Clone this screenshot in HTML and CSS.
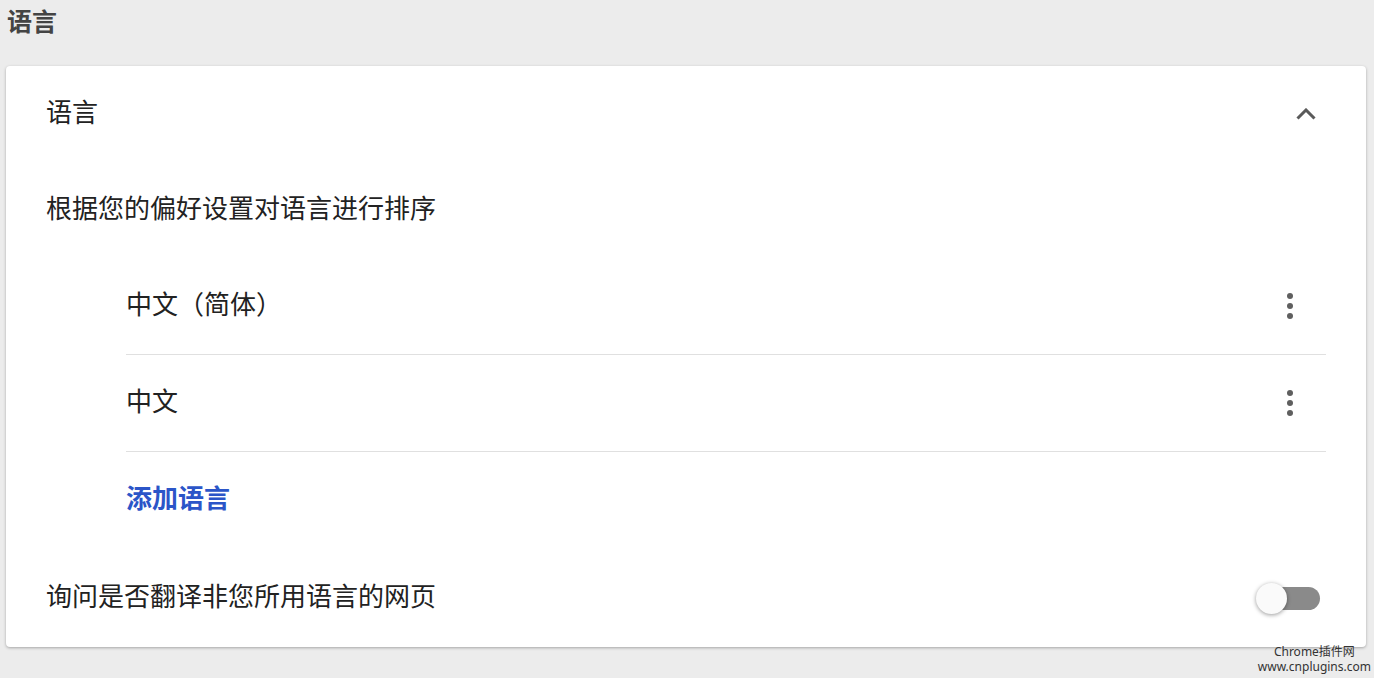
FILE: index.html
```html
<!DOCTYPE html>
<html>
    <head>
        <meta charset="UTF-8">
        <title>语言</title>
        <link rel="stylesheet" href="styles.css">
    </head>
    <body>
        <h1 class="page-title">语言</h1>

        <div class="card">
            <div class="row title-row">
                <span class="label">语言</span>
                <svg class="chevron" width="20" height="12" viewBox="0 0 20 12">
                    <path d="M1.5 10.5 L10 2 L18.5 10.5" fill="none" stroke="#5a5a5a" stroke-width="3"/>
                </svg>
            </div>

            <div class="row"><span class="label">根据您的偏好设置对语言进行排序</span></div>

            <div class="lang-list">
                <div class="row lang-item">
                    <span class="label">中文（简体）</span>
                    <span class="kebab"><i></i><i></i><i></i></span>
                </div>
                <div class="row lang-item">
                    <span class="label">中文</span>
                    <span class="kebab"><i></i><i></i><i></i></span>
                </div>
                <div class="row add-lang"><span class="label">添加语言</span></div>
            </div>

            <div class="row toggle-row">
                <span class="label">询问是否翻译非您所用语言的网页</span>
                <span class="toggle"><span class="knob"></span></span>
            </div>
        </div>

        <div class="watermark">
            <div>Chrome插件网<br>www.cnplugins.com</div>
        </div>
    </body>
</html>
```
FILE: styles.css
```css
body{
    margin:0;
    padding:0 8px 0 6px;
    background-color:#ececec;
    font-family:"Noto Sans CJK SC", "Noto Sans", sans-serif;
    color:#222;
}

.page-title{
    margin:0;
    padding:5px 0 0 1px;
    font-size:25px;
    line-height:30px;
    font-weight:bold;
    color:#444;
}

.card{
    margin-top:31px;
    background-color:#fff;
    border-radius:4px;
    box-shadow:0 1px 3px rgba(0,0,0,0.3);
    padding:0 40px 0 40px;
}

.row{
    display:flex;
    align-items:center;
    justify-content:space-between;
    height:96px;
    font-size:26px;
}

/* noto cjk sits low in its line box, nudge the text up */
.label{
    padding-bottom:8px;
}

.chevron{
    margin-right:10px;
}

.lang-list{
    margin-left:80px;
}

.lang-item{
    border-bottom:1px solid #e0e0e0;
}

.kebab{
    display:flex;
    flex-direction:column;
    align-items:center;
    gap:4px;
    width:24px;
    margin-right:24px;
}

.kebab i{
    width:6px;
    height:6px;
    border-radius:50%;
    background-color:#5f5f5f;
}

.add-lang{
    color:#2b55c8;
    font-weight:bold;
    height:97px;
}

.toggle-row{
    height:98px;
}

.toggle{
    position:relative;
    width:58px;
    height:23px;
    border-radius:12px;
    background-color:#8a8a8a;
    margin-right:6px;
}

.knob{
    position:absolute;
    left:-6px;
    top:-4px;
    width:31px;
    height:31px;
    border-radius:50%;
    background-color:#fafafa;
    box-shadow:0 1px 4px rgba(0,0,0,0.4);
}

.watermark{
    display:flex;
    justify-content:flex-end;
    margin-top:-3px;
    margin-right:-5px;
}

.watermark div{
    text-align:center;
    font-family:"Noto Sans", "Noto Sans CJK SC", sans-serif;
    font-size:12px;
    line-height:15px;
    color:#333;
}
```
